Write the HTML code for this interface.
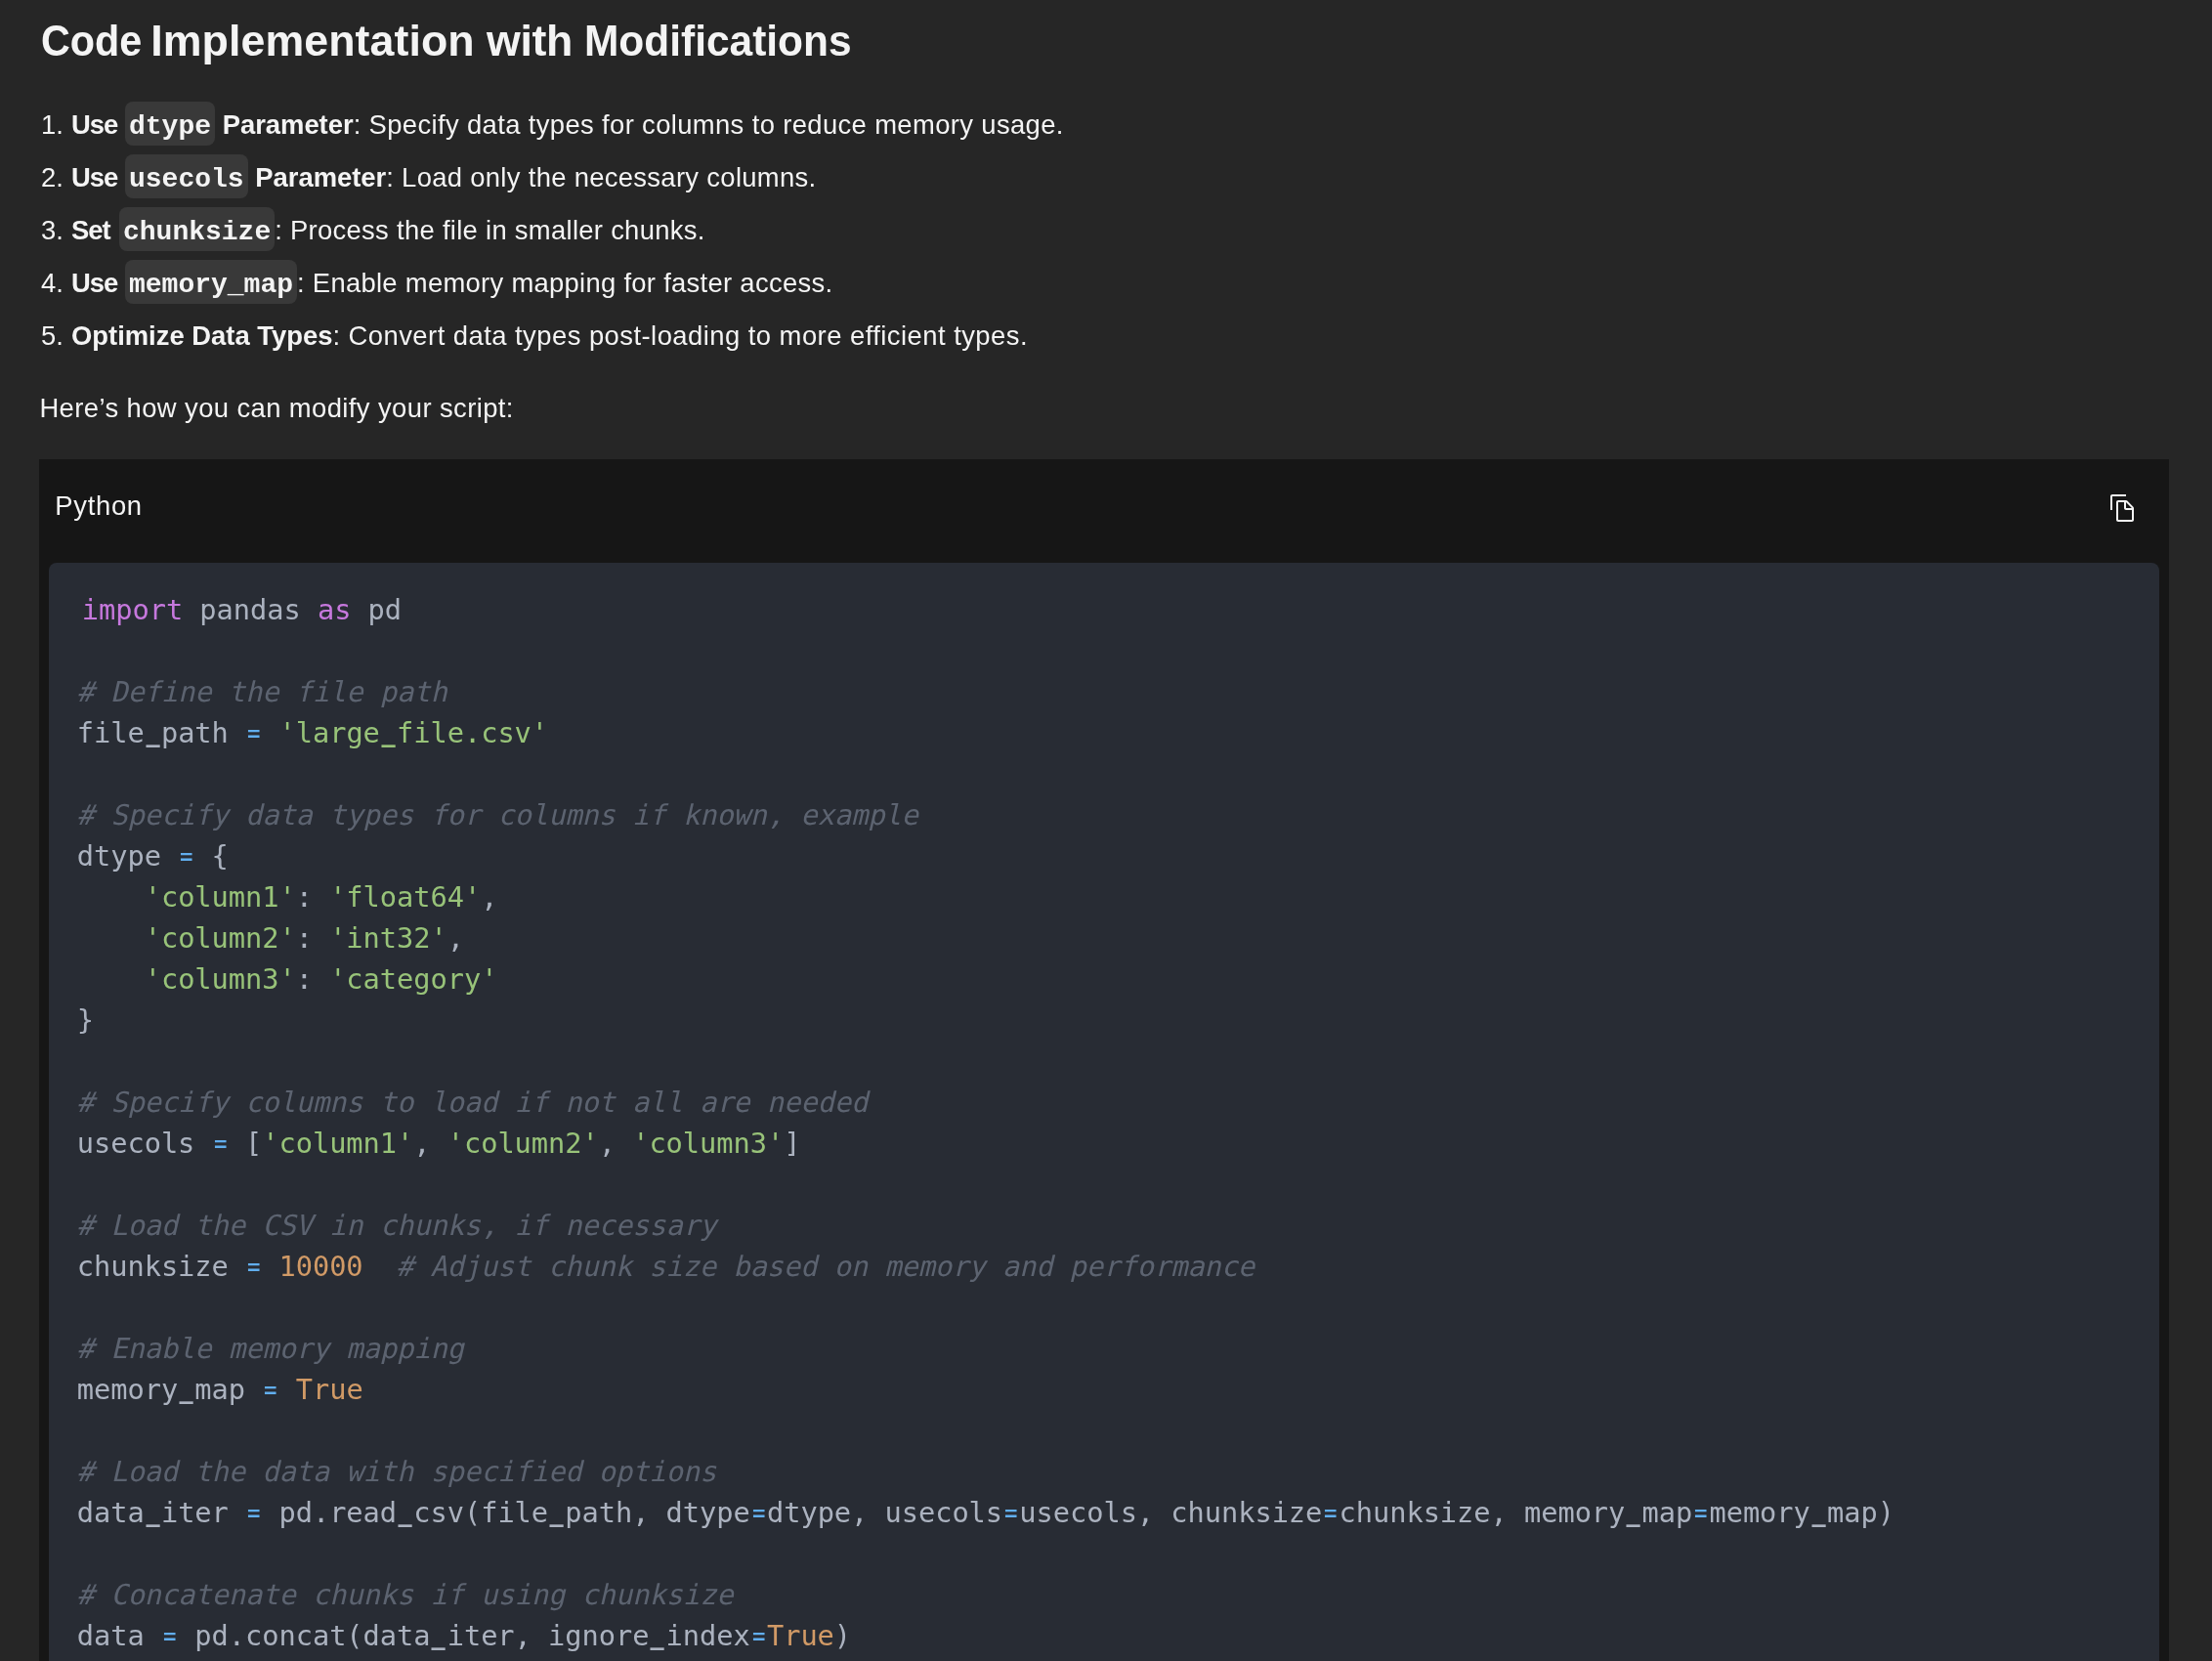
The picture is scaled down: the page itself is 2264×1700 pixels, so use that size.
<!DOCTYPE html>
<html lang="en">
<head>
<meta charset="utf-8">
<title>Code Implementation with Modifications</title>
<style>
*{box-sizing:border-box}
html,body{margin:0;padding:0}
body{width:2264px;height:1700px;overflow:hidden;background:#262626;color:#f4f4f4;
  font-family:"Liberation Sans",sans-serif;position:relative}
h2{position:absolute;left:0;top:0;margin:0;font-weight:700;font-size:44.7px;line-height:84px;white-space:pre;color:#f4f4f4;height:84px;width:1000px}
h2 span{position:absolute;top:0}
ol{position:absolute;left:0;top:0;margin:0;padding:0;list-style:none}
ol li{position:absolute;left:42px;height:54px;line-height:54px;font-size:27.4px;white-space:nowrap}
ol li .n{display:inline-block;width:31px}
ol li .r{letter-spacing:.35px}
#wrap{position:absolute;left:0;top:0;width:2264px;height:1700px;overflow:hidden;will-change:transform}
b{font-weight:700}
b.w{display:inline-block;letter-spacing:-1px}
code.chip{font-family:"Liberation Mono",monospace;font-weight:700;font-size:28px;background:#393939;border-radius:8px;padding:9.7px 4px 4.6px;letter-spacing:0}
p.lead{position:absolute;left:40.4px;top:390.5px;margin:0;font-size:27.4px;line-height:54px;white-space:nowrap;letter-spacing:.41px}
.box{position:absolute;left:40px;top:470px;width:2180px;height:1300px;background:#161616}
.lang{position:absolute;left:16.3px;top:21.3px;font-size:27.4px;line-height:54px;letter-spacing:.7px}
.copy{position:absolute;left:2116px;top:34px;width:32px;height:32px;fill:#f4f4f4}
pre{position:absolute;left:10px;top:106px;width:2160px;height:1200px;margin:0;background:#282c34;border-radius:8px;
  padding:26.7px 0 0 28.8px;font-family:"DejaVu Sans Mono","Liberation Mono",monospace;font-size:28.7px;letter-spacing:-0.05px;line-height:42px;color:#abb2bf;white-space:pre;overflow:hidden}
pre code{font-family:inherit;padding-left:5px}
.u{display:inline-block;font-weight:700;transform:translateY(-2px) scaleX(.82)}
.k{color:#c678dd}.s{color:#98c379}.c{color:#5c6370;display:inline-block;transform:skewX(-13deg);transform-origin:0 30.9px}.o{color:#61aeee;display:inline-block;transform:scaleX(.78)}.m{color:#d19a66}
</style>
</head>
<body>
<div id="wrap">
<h2><span style="left:41.6px;transform:scaleX(.925);transform-origin:0 50%">Code </span><span style="left:154.3px;letter-spacing:.08px">Implementation </span><span style="left:498.1px;letter-spacing:-.37px">with </span><span style="left:597.8px;transform:scaleX(.95);transform-origin:0 50%">Modifications</span></h2>
<ol>
<li style="top:100.5px"><span class="n">1.</span><b class="w" style="width:55px">Use </b><code class="chip">dtype</code><b> Parameter</b><span class="r" style="letter-spacing:.37px">: Specify data types for columns to reduce memory usage.</span></li>
<li style="top:154.5px"><span class="n">2.</span><b class="w" style="width:55px">Use </b><code class="chip">usecols</code><b> Parameter</b><span class="r" style="letter-spacing:.32px">: Load only the necessary columns.</span></li>
<li style="top:208.5px"><span class="n">3.</span><b class="w" style="width:49px">Set </b><code class="chip">chunksize</code><span class="r" style="letter-spacing:.30px">: Process the file in smaller chunks.</span></li>
<li style="top:262.5px"><span class="n">4.</span><b class="w" style="width:55px">Use </b><code class="chip">memory_map</code><span class="r" style="letter-spacing:.295px">: Enable memory mapping for faster access.</span></li>
<li style="top:316.5px"><span class="n">5.</span><b>Optimize Data Types</b><span class="r" style="letter-spacing:.465px">: Convert data types post-loading to more efficient types.</span></li>
</ol>
<p class="lead">Here’s how you can modify your script:</p>
<div class="box">
<div class="lang">Python</div>
<svg class="copy" viewBox="0 0 32 32"><path d="M27.4 14.7l-6.1-6.1C21 8.2 20.5 8 20 8h-8c-1.1 0-2 .9-2 2v18c0 1.1.9 2 2 2h14c1.1 0 2-.9 2-2V16.1c0-.5-.2-1-.6-1.4zM20 10l5.9 6H20v-6zm-8 18V10h6v6c0 1.1.9 2 2 2h6v10H12z"/><path d="M6 18H4V4c0-1.1.9-2 2-2h14v2H6v14z"/></svg>
<pre><code><span class="k">import</span> pandas <span class="k">as</span> pd

<span class="c"># Define the file path</span>
file<span class="u">_</span>path <span class="o">=</span> <span class="s">'large<span class="u">_</span>file.csv'</span>

<span class="c"># Specify data types for columns if known, example</span>
dtype <span class="o">=</span> {
    <span class="s">'column1'</span>: <span class="s">'float64'</span>,
    <span class="s">'column2'</span>: <span class="s">'int32'</span>,
    <span class="s">'column3'</span>: <span class="s">'category'</span>
}

<span class="c"># Specify columns to load if not all are needed</span>
usecols <span class="o">=</span> [<span class="s">'column1'</span>, <span class="s">'column2'</span>, <span class="s">'column3'</span>]

<span class="c"># Load the CSV in chunks, if necessary</span>
chunksize <span class="o">=</span> <span class="m">10000</span>  <span class="c"># Adjust chunk size based on memory and performance</span>

<span class="c"># Enable memory mapping</span>
memory<span class="u">_</span>map <span class="o">=</span> <span class="m">True</span>

<span class="c"># Load the data with specified options</span>
data<span class="u">_</span>iter <span class="o">=</span> pd.read<span class="u">_</span>csv(file<span class="u">_</span>path, dtype<span class="o">=</span>dtype, usecols<span class="o">=</span>usecols, chunksize<span class="o">=</span>chunksize, memory<span class="u">_</span>map<span class="o">=</span>memory<span class="u">_</span>map)

<span class="c"># Concatenate chunks if using chunksize</span>
data <span class="o">=</span> pd.concat(data<span class="u">_</span>iter, ignore<span class="u">_</span>index<span class="o">=</span><span class="m">True</span>)
</code></pre>
</div>
</div>
</body>
</html>
